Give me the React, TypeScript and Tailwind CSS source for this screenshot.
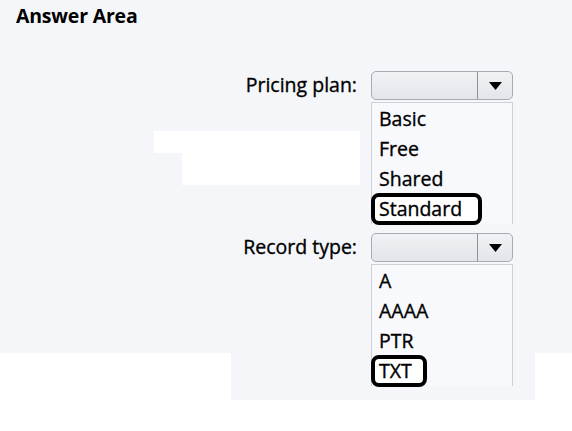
import React from 'react';

interface ChoiceProps {
  label: string;
  options: string[];
  answer: string;
  answerWidth: string;
}

function Dropdown() {
  return (
    <div className="flex h-[29px] w-[142px] rounded-[5px] border border-[#a9abb0] bg-gradient-to-b from-[#f1f2f5] to-[#e4e5ea]">
      <div className="flex-1 border-r border-[#8f9196]" />
      <div className="flex w-[34px] items-center justify-center">
        <svg width="13" height="8" viewBox="0 0 13 8">
          <path d="M0 0 H13 L6.5 8 Z" fill="#000" />
        </svg>
      </div>
    </div>
  );
}

function Choice({ label, options, answer, answerWidth }: ChoiceProps) {
  return (
    <div className="flex">
      <div className="w-[357px] pt-[2px] text-right text-[19.5px] leading-[24px] text-black [-webkit-text-stroke:0.35px_black]">
        {label}
      </div>
      <div className="ml-[14px] flex w-[142px] flex-col">
        <Dropdown />
        <div className="mt-[2px] h-[122px] border border-b-0 border-[#cfd0d4] bg-[#f8f9fc] pt-[1px]">
          {options.map((opt) => (
            <div
              key={opt}
              className="flex h-[30px] items-center pl-[7px] text-[19.5px] leading-[24px] text-black [-webkit-text-stroke:0.35px_black]"
            >
              {opt === answer ? (
                <span
                  className={`-ml-[8px] h-[32px] ${answerWidth} rounded-[8px] border-[4px] border-black bg-white pl-[4px] leading-[24px]`}
                >
                  {opt}
                </span>
              ) : (
                opt
              )}
            </div>
          ))}
        </div>
      </div>
    </div>
  );
}

export default function App() {
  return (
    <div
      className="relative flex h-[431px] w-[572px] flex-col bg-white"
      style={{ fontFamily: '"Open Sans", "Noto Sans", sans-serif' }}
    >
      {/* faint white patches in the scan */}
      <div className="pointer-events-none absolute left-[154px] top-[131px] h-[22px] w-[92px] bg-white" />
      <div className="pointer-events-none absolute left-[182px] top-[131px] h-[54px] w-[178px] bg-white" />
      <div className="pointer-events-none absolute left-0 top-[353px] h-[47px] w-[231px] bg-white" />
      <div className="pointer-events-none absolute left-[535px] top-[353px] h-[47px] w-[37px] bg-white" />
      <div className="h-[400px] bg-[#f5f6fa]">
        <div className="pl-[16px] pt-[3px] text-[19.5px] font-bold leading-[26px] tracking-[-0.2px] text-black">
          Answer Area
        </div>
        <div className="relative mt-[42px] flex flex-col gap-[9px]">
          <Choice
            label="Pricing plan:"
            options={['Basic', 'Free', 'Shared', 'Standard']}
            answer="Standard"
            answerWidth="w-[111px]"
          />
          <Choice label="Record type:" options={['A', 'AAAA', 'PTR', 'TXT']} answer="TXT" answerWidth="w-[56px]" />
        </div>
      </div>
    </div>
  );
}
